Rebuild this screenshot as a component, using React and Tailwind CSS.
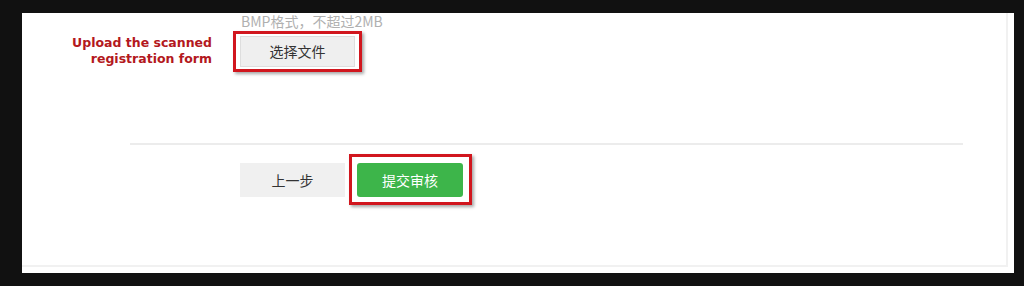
export default function App() {
  const cjk = { fontFamily: '"Noto Sans CJK SC", "Noto Sans", sans-serif' };
  return (
    <div className="w-[1024px] h-[286px] bg-[#111111] pt-[13px] pl-[22px] overflow-hidden">
      <div className="w-[992px] h-[260px] bg-white">
        <div className="w-[986px] h-[254px] border-r-2 border-b-2 border-[#f1f1f1] flex flex-col">
          <div className="pl-[219px] h-[18px] text-[14px] leading-[16px] text-[#b0b0b0]" style={cjk}>
            BMP格式，不超过2MB
          </div>
          <div className="flex items-start">
            <div
              className="w-[190px] pt-[4px] text-right text-[12.5px] leading-[16px] font-bold text-[#b31820]"
              style={{ fontFamily: '"DejaVu Sans", Verdana, sans-serif' }}
            >
              Upload the scanned
              <br />
              registration form
            </div>
            <div className="ml-[21px] border-[3px] border-[#d1161e] px-[4px] py-[2px] shadow-[2px_2px_3px_rgba(0,0,0,0.35)]">
              <div
                className="w-[115px] h-[31px] bg-[#efefef] border border-[#dedede] flex items-center justify-center text-[14px] text-[#333]"
                style={cjk}
              >
                选择文件
              </div>
            </div>
          </div>
          <div className="mt-[71px] ml-[108px] w-[833px] h-[2px] bg-[#ececec]" />
          <div className="mt-[9px] pl-[218px] flex items-start gap-[4px]">
            <div
              className="mt-[9px] w-[105px] h-[34px] bg-[#f0f0f0] flex items-center justify-center text-[14px] text-[#333]"
              style={cjk}
            >
              上一步
            </div>
            <div className="border-[3px] border-[#d1161e] pl-[5px] pt-[6px] pr-[6px] pb-[5px] shadow-[2px_2px_3px_rgba(0,0,0,0.35)]">
              <div
                className="w-[106px] h-[34px] bg-[#3db54a] rounded-[3px] flex items-center justify-center text-[14px] text-white"
                style={cjk}
              >
                提交审核
              </div>
            </div>
          </div>
        </div>
      </div>
    </div>
  );
}
